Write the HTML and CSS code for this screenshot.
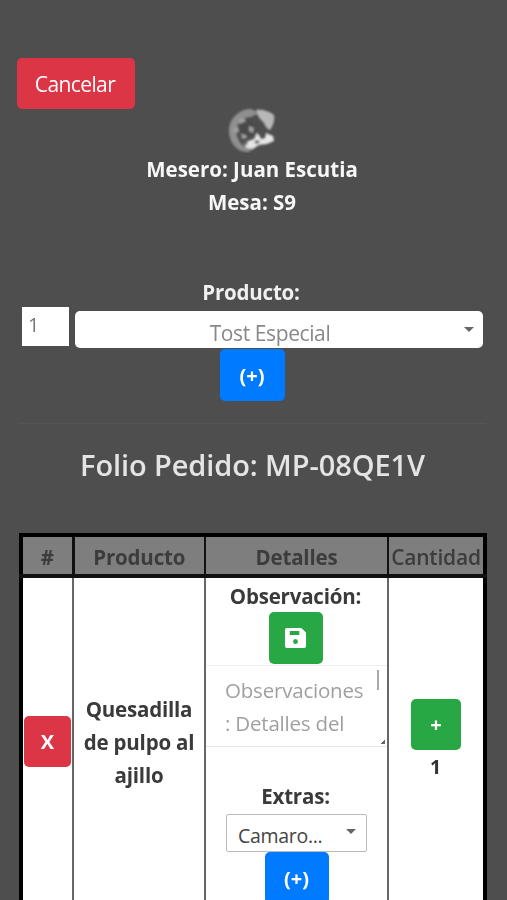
FILE: index.html
```html
<!DOCTYPE html>
<html lang="es">
<head>
<meta charset="utf-8">
<title>Pedido</title>
<link rel="stylesheet" href="styles.css">
</head>
<body>
<main class="page">
  <div class="top-actions"><button class="btn btn-red btn-cancel">Cancelar</button></div>
  <section class="waiter">
    <svg class="logo" width="52" height="46" viewBox="0 0 52 46" aria-hidden="true">
      <defs><filter id="soft"><feGaussianBlur stdDeviation="0.8"/></filter></defs>
      <g filter="url(#soft)">
        <path d="M3 24C3 12 12 3 23 2c4 0 7 2 8 5l-6 3c-7 0-12 4-14 10-2 6 1 12 4 17 3 3 7 4 12 5l-4 3C12 46 3 36 3 24Z" fill="#8f8f8f"/>
        <path d="M30 3c6-1 13 1 18 5 1 5-1 11-4 15-3-1-5-4-6-7-3-3-7-7-8-13Z" fill="#b8b8b8"/>
        <path d="M12 19c2-4 6-6 10-6 4 1 7 4 8 8 1 4 0 7-3 8-5 1-8 0-11-2-3-2-4-5-4-8Z" fill="#4a4a4a"/>
        <path d="M12 13l6-2 2 3-6 3ZM7 21l5-1 1 5-5 1ZM23 19l5 2-1 5-4-2ZM15 27l5 1 1 3-5 1Z" fill="#a0a0a0"/>
        <path d="M31 26c2 2 3 3 4 6l4-1 1-5 7 3 1 5-7 3-8 1-6 4-6-1-3-3 4-4 6-2Z" fill="#e6e6e6"/>
        <path d="M30 33l4 1-2 3-4-1ZM17 35l4-1 1 3-4 2Z" fill="#6c6c6c"/>
      </g>
    </svg>
    <p class="waiter-line">Mesero: Juan Escutia</p>
    <p class="waiter-line">Mesa: S9</p>
  </section>
  <section class="product-form">
    <label class="product-label">Producto:</label>
    <div class="product-row">
      <div class="qty-input">1</div>
      <div class="select select-main"><span>Tost Especial</span><i class="caret"></i></div>
    </div>
    <button class="btn btn-blue btn-add">(+)</button>
  </section>
  <hr class="rule">
  <h1 class="folio">Folio Pedido: MP-08QE1V</h1>
  <table class="orders">
    <colgroup><col class="c1"><col class="c2"><col class="c3"><col class="c4"></colgroup>
    <thead>
      <tr><th>#</th><th>Producto</th><th>Detalles</th><th class="th-qty">Cantidad</th></tr>
    </thead>
    <tbody>
      <tr>
        <td class="cell-x"><button class="btn btn-red btn-x">X</button></td>
        <td class="cell-name">Quesadilla de pulpo al ajillo</td>
        <td class="cell-details">
          <div class="detail-title">Observación:</div>
          <button class="btn btn-green btn-save" aria-label="Guardar">
            <svg width="23" height="20" viewBox="0 0 24 20" preserveAspectRatio="none" aria-hidden="true">
              <path fill="#fff" fill-rule="evenodd" d="M3 0h15l5 4.500V18a2 2 0 0 1-2 2H3a2 2 0 0 1-2-2V2a2 2 0 0 1 2-2Zm3 3v4h10V3Zm6 8a2.500 2.500 0 1 0 0 5 2.500 2.500 0 0 0 0-5Z"/>
            </svg>
          </button>
          <div class="textarea">Observaciones : Detalles del<i class="scrollbar"></i><i class="grip"></i></div>
          <div class="detail-title extras">Extras:</div>
          <div class="select select-extra"><span>Camaro...</span><i class="caret"></i></div>
          <button class="btn btn-blue btn-add btn-add-extra">(+)</button>
        </td>
        <td class="cell-qty">
          <button class="btn btn-green btn-plus">+</button>
          <div class="qty-value">1</div>
        </td>
      </tr>
    </tbody>
  </table>
</main>
</body>
</html>
```

FILE: styles.css
```css
* { box-sizing: border-box; }
html, body { margin: 0; height: 900px; overflow: hidden; }
body {
  background: #4e4e4e;
  color: #fff;
  font-family: "Open Sans", "Noto Sans", sans-serif;
  font-size: 20px;
}
.page { padding: 58px 21px 0 19px; filter: blur(0.7px); }
.btn {
  display: block;
  border: 0;
  border-radius: 5px;
  color: #fff;
  font-family: inherit;
  padding: 0;
  text-align: center;
}
.btn-red { background: #dc3545; }
.btn-blue { background: #007bff; }
.btn-green { background: #28a745; }
.top-actions { display: flex; margin-left: -2px; }
.btn-cancel { width: 118px; height: 51px; font-size: 21px; letter-spacing: -0.6px; padding-right: 2px; }
.waiter { display: flex; flex-direction: column; align-items: center; margin-top: -2px; margin-left: -1px; }
.logo { display: block; }
.waiter-line {
  margin: 0;
  height: 33px;
  line-height: 33px;
  font-size: 20.500px;
  font-weight: 700;
  letter-spacing: 0;
  color: #f7f7f7;
}
.product-form { display: flex; flex-direction: column; align-items: center; margin-top: 59px; }
.product-label { font-size: 20.500px; font-weight: 700; letter-spacing: -0.2px; line-height: 28px; color: #f0f0f0; padding-right: 3px; }
.product-row { display: flex; align-items: flex-start; align-self: stretch; gap: 6px; margin-left: 3px; margin-right: -17px; margin-top: 1px; }
.qty-input {
  width: 47px;
  height: 39px;
  background: #fff;
  color: #777;
  font-size: 20px;
  line-height: 36px;
  padding-left: 6px;
  flex: none;
}
.select {
  position: relative;
  background: #fff;
  color: #888;
  text-align: center;
}
.select-main {
  flex: none;
  width: 408px;
  height: 37px;
  margin-top: 4px;
  border-radius: 5px;
  font-size: 21px;
  line-height: 44px;
  letter-spacing: -0.4px;
  padding-right: 18px;
}
.caret {
  position: absolute;
  width: 0;
  height: 0;
  border-left: 5px solid transparent;
  border-right: 5px solid transparent;
  border-top: 5px solid #666;
  right: 9px;
  top: 16px;
}
.btn-add { width: 65px; height: 52px; font-size: 20px; font-weight: 700; }
.product-form .btn-add { margin-right: 1px; margin-top: 1px; }
.rule { border: 0; border-top: 1px solid #555; margin: 22px 0 0; }
.folio {
  margin: 11px 0 0;
  height: 60px;
  line-height: 60px;
  text-align: center;
  font-size: 29px;
  font-weight: 600;
  letter-spacing: -0.1px;
  color: #e4e4e4;
}
.orders {
  table-layout: fixed;
  width: 464px;
  margin-top: 38px;
  border-collapse: collapse;
  border: 4px solid #000;
  background: #fff;
  color: #333;
}
.c1 { width: 52px; } .c2 { width: 132px; } .c3 { width: 183px; } .c4 { width: 97px; }
.orders th {
  height: 41px;
  background: #7e7e7e;
  border: 2px solid #111;
  border-bottom-width: 4px;
  color: #3c3c3c;
  font-size: 20.500px;
  font-weight: 700;
  padding: 3px 0 0;
  white-space: nowrap;
  overflow: hidden;
  letter-spacing: -0.2px;
}
.orders th:first-child { border-right-width: 3px; }
.orders .th-qty { font-weight: 600; font-size: 21px; letter-spacing: -0.2px; }
.orders td { border: 2px solid #666; padding: 0; text-align: center; vertical-align: top; }
.orders tbody tr { height: 330px; }
.orders .cell-x { padding-top: 138px; }
.btn-x { width: 47px; height: 51px; margin: 0 0 0 1px; font-size: 20px; font-weight: 700; }
.orders .cell-name { padding: 115px 4px 0; font-size: 20.500px; font-weight: 700; line-height: 33px; color: #3a3a3a; letter-spacing: -0.2px; }
.orders .cell-details { padding: 0; height: 322px; }
.detail-title { font-size: 20.500px; font-weight: 700; line-height: 36px; color: #3a3a3a; height: 33px; letter-spacing: -0.2px; padding-right: 2px; }
.btn-save { width: 54px; height: 52px; margin: 1px auto 0; transform: translateX(-1px); display: flex; align-items: center; justify-content: center; }
.textarea {
  position: relative;
  margin-top: 1px;
  height: 82px;
  padding: 8px 20px 0 19px;
  border-top: 1px solid #eee;
  border-bottom: 1px solid #e6e6e6;
  color: #a0a0a0;
  font-size: 20.500px;
  line-height: 33px;
  text-align: left;
  overflow: hidden;
  letter-spacing: -0.2px;
}
.scrollbar { position: absolute; right: 8px; top: 4px; width: 2px; height: 20px; background: #aaa; }
.grip { position: absolute; right: 2px; bottom: 2px; width: 5px; height: 5px; background: linear-gradient(135deg, transparent 55%, #666 55%); }
.extras { margin-top: 31px; }
.select-extra {
  width: 141px;
  height: 38px;
  margin: 3px auto 0;
  border: 1px solid #bbb;
  border-radius: 2px;
  color: #444;
  font-size: 19.500px;
  line-height: 42px;
  text-align: left;
  padding-left: 11px;
  letter-spacing: -0.3px;
}
.select-extra .caret { right: 10px; top: 14px; }
.btn-add-extra { margin: 0 auto; width: 64px; }
.orders .cell-qty { padding-top: 121px; }
.btn-plus { width: 50px; height: 51px; margin: 0 auto; font-size: 20px; font-weight: 700; }
.qty-value { font-size: 19.500px; font-weight: 700; line-height: 34px; color: #333; padding-right: 1px; }
```
